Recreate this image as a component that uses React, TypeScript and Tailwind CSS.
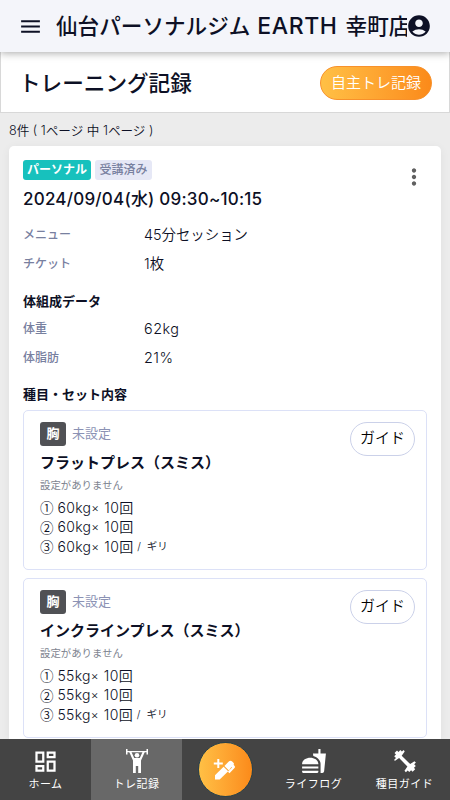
import type { ReactNode } from "react";
import {
    MdAccountCircle,
    MdFastfood,
    MdMenu,
    MdMoreVert,
    MdOutlineDashboard,
} from "react-icons/md";

type Exercise = {
    name: string;
    weight: string;
};

const exercises: Exercise[] = [
    { name: "フラットプレス（スミス）", weight: "60kg" },
    { name: "インクラインプレス（スミス）", weight: "55kg" },
];

const setMarks = ["①", "②", "③"];

function LifterIcon() {
    return (
        <svg width="24" height="26" viewBox="0 0 24 26" fill="currentColor">
            <path d="M1 1h1.500v2h19V1H23v5.500h-1.500V4.300h-19v2.200H1z" />
            <circle cx="12" cy="7.200" r="2.300" />
            <path d="M4.200 4h2.300l2.700 6h5.600l2.700-6h2.300L16 12.500V25h-2.800v-7h-2.400v7H8V12.500z" />
        </svg>
    );
}

function PenPlusIcon() {
    return (
        <svg width="24" height="24" viewBox="0 0 24 24" fill="currentColor">
            <path d="M4.300 1h2v3.500h3.500v2H6.300V10h-2V6.500H.8v-2h3.500z" />
            <path d="M2 17.300 10.600 8.700l4.600 4.600L6.700 21.500H2z" />
            <path d="m11.400 7.900 4.400-4.400q1.700-1.700 3.400 0l1.200 1.200q1 1 .2 2l1 1.400q.8.900-.1 1.900l-5 5.300-1.600-1.500 4.100-4.200-.6-.6-2.500 3.400z" />
        </svg>
    );
}

function DumbbellIcon() {
    return (
        <svg width="24" height="24" viewBox="0 0 24 24" fill="currentColor">
            <path d="M1.200 7.200 3 5.400 1.500 3.900 4 1.400l1.500 1.500L7.300 1l1.600 1.600L10.700 1l1 1.500-3 4.300 8.500 8.300 4.200-2.900 1.500 1.300-1.700 1.800 1.600 1.600-1.800 1.800 1.200 1.500-2.600 2.600-1.500-1.500-1.800 1.800-1.600-1.600-1.800 1.700-1.400-1.500 2.900-4.200-8.300-8.500-4.300 3L1.200 10.700 3 8.900z" />
        </svg>
    );
}

function InfoRow({ label, value }: { label: string; value: ReactNode }) {
    return (
        <div className="flex h-[29.500px] items-center">
            <span className="w-[121px] text-xs font-medium text-[#78809f]">{label}</span>
            <span className="text-[14.400px] font-[350]">{value}</span>
        </div>
    );
}

function ExerciseCard({ name, weight }: Exercise) {
    return (
        <div className="flex h-[160px] shrink-0 items-start justify-between rounded-[5px] border border-[#dce1f7] pl-4 pr-[11px] pt-[11px]">
            <div>
                <div className="flex items-center gap-1.5">
                    <span className="flex h-6 w-[26px] items-center justify-center rounded-[3px] bg-[#505155] text-[13px] font-bold text-white">胸</span>
                    <span className="text-[13px] text-[#8b92b4]">未設定</span>
                </div>
                <h3 className="mt-[5px] text-[15px] font-bold leading-6">{name}</h3>
                <p className="mt-[3px] text-[10.400px] leading-4 text-[#7e8490]">設定がありません</p>
                <div className="mt-1">
                    {setMarks.map((mark, i) => (
                        <p key={mark} className="flex h-[19.600px] items-center whitespace-pre text-[14px] font-[350] leading-none">
                            <span className="w-[17.500px] font-['Noto_Sans_CJK_JP',sans-serif] text-[13.500px]">{mark}</span>
                            <span className="tracking-[0.300px]">{weight}</span>
                            <span className="text-xs">×</span>
                            <span className="pl-[5px] tracking-[0.500px]">10</span>
                            <span className="text-[14px]">回</span>
                            {i === 2 && <span className="pl-[4px] text-[10.500px]">{"/  ギリ"}</span>}
                        </p>
                    ))}
                </div>
            </div>
            <button className="h-[34px] w-[65px] rounded-full border border-[#cbd1e9] pb-0.5 text-[15px] font-[350] text-black">ガイド</button>
        </div>
    );
}

function NavItem({ label, active, children }: { label: string; active?: boolean; children: ReactNode }) {
    return (
        <a className={`flex w-[91px] shrink-0 flex-col items-center pt-2 text-white ${active ? "bg-[#686868]" : ""}`}>
            <span className="flex h-7 items-center justify-center">{children}</span>
            <span className="mt-px text-[11px] leading-4 tracking-[0.500px]">{label}</span>
        </a>
    );
}

export default function App() {
    return (
        <div className="flex h-[800px] w-[450px] flex-col overflow-hidden bg-[#ececec] font-[Inter,'Noto_Sans_CJK_JP',sans-serif] text-[#0d1025]">
            {/* --- TOP BAR --- */}
            <header className="relative z-10 flex h-[52px] shrink-0 items-center bg-[#f4f5fa] pl-[18px] pr-[18px] shadow-[0_1px_8px_rgba(0,0,0,0.35)]">
                <MdMenu size={25} className="shrink-0" />
                <h1 className="ml-[13px] w-[351px] shrink-0 overflow-hidden whitespace-nowrap text-[21.600px] font-medium">
                    仙台パーソナルジム<span className="pl-[7px] pr-[8px] text-[23px] tracking-[0.600px]">EARTH</span>幸町店
                </h1>
                <MdAccountCircle size={26} className="-ml-px shrink-0" />
            </header>

            {/* --- PAGE TITLE --- */}
            <section className="flex h-[61px] shrink-0 items-center justify-between border border-t-0 border-[#d8d8d8] bg-white pl-[18px] pr-[17px]">
                <h2 className="pt-[3px] text-[21.600px] font-medium">トレーニング記録</h2>
                <button className="mt-[2px] h-[34px] w-[112px] rounded-full border border-[#f8912b] bg-linear-to-r from-[#ffc045] to-[#fb8a19] pt-px text-[15px] font-[350] text-white">自主トレ記録</button>
            </section>

            <p className="flex h-[33px] shrink-0 items-center pl-[9px] pt-[3px] text-[12.600px] font-[350]">8件 ( 1ページ 中 1ページ )</p>

            {/* --- LESSON RECORD --- */}
            <main className="mx-[9px] flex min-h-0 flex-1 flex-col overflow-hidden rounded-t-[5px] bg-white px-3.5 pt-3.5 shadow-[0_2px_10px_rgba(0,0,0,0.06)]">
                <div className="flex items-start justify-between">
                    <div>
                        <div className="flex gap-1">
                            <span className="flex h-5 w-[68px] items-center justify-center rounded-[3px] bg-[#17c1bd] text-xs font-bold text-white">パーソナル</span>
                            <span className="flex h-5 w-[57px] items-center justify-center rounded-[3px] bg-[#e6e8f6] text-xs font-medium text-[#78809f]">受講済み</span>
                        </div>
                        <p className="mt-[7px] text-[17px] font-medium leading-6 tracking-[0.220px]">2024/09/04(水) 09:30~10:15</p>
                    </div>
                    <MdMoreVert size={26} className="mt-1 text-[#606060]" />
                </div>
                <div className="mt-[9px]">
                    <InfoRow label="メニュー" value="45分セッション" />
                    <InfoRow label="チケット" value="1枚" />
                </div>
                <h3 className="mt-3 text-[13px] font-bold leading-5">体組成データ</h3>
                <div className="mt-[3px]">
                    <InfoRow label="体重" value={<span className="tracking-[0.500px]">62kg</span>} />
                    <InfoRow label="体脂肪" value={<span className="tracking-[0.500px]">21%</span>} />
                </div>
                <h3 className="mt-[11px] text-[13px] font-bold leading-5">種目・セット内容</h3>
                <div className="mt-1.5 flex flex-col gap-2">
                    {exercises.map((exercise) => (
                        <ExerciseCard key={exercise.name} {...exercise} />
                    ))}
                </div>
            </main>

            {/* --- BOTTOM NAVIGATION --- */}
            <nav className="relative z-10 flex h-[61px] shrink-0 bg-[#444444]">
                <NavItem label="ホーム">
                    <MdOutlineDashboard size={27} />
                </NavItem>
                <NavItem label="トレ記録" active>
                    <LifterIcon />
                </NavItem>
                <div className="flex w-[86px] items-center justify-center">
                    <button className="flex size-[55px] items-center justify-center rounded-full border border-[#29424a] bg-linear-to-r from-[#ffc045] to-[#fb8a19] text-white">
                        <PenPlusIcon />
                    </button>
                </div>
                <NavItem label="ライフログ">
                    <MdFastfood size={26} />
                </NavItem>
                <NavItem label="種目ガイド">
                    <DumbbellIcon />
                </NavItem>
            </nav>
        </div>
    );
}
